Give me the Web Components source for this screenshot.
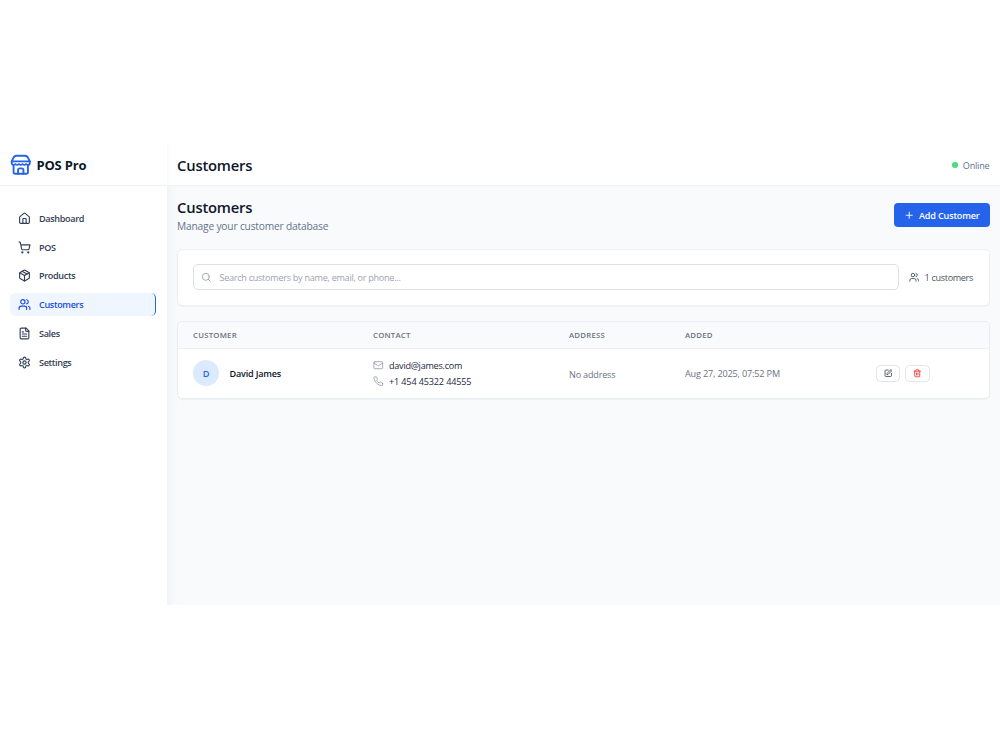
<!DOCTYPE html>
<html lang="en">
<head>
<meta charset="utf-8">
<title>POS Pro</title>
<style>
html, body { margin: 0; padding: 0; background: #fff; }
body {
    width: 1000px;
    height: 750px;
    overflow: hidden;
    font-family: "Open Sans", "Noto Sans", "Liberation Sans", sans-serif;
    font-size: 9.1px;
    letter-spacing: -.2px;
    color: #1e293b;
}
</style>
</head>
<body>
<pos-app>
    <pos-sidebar slot="sidebar" brand="POS Pro">
        <nav-item icon="home">Dashboard</nav-item>
        <nav-item icon="cart">POS</nav-item>
        <nav-item icon="box">Products</nav-item>
        <nav-item icon="users" active>Customers</nav-item>
        <nav-item icon="file">Sales</nav-item>
        <nav-item icon="gear">Settings</nav-item>
    </pos-sidebar>
    <top-bar slot="header" status="Online">Customers</top-bar>
    <page-heading subtitle="Manage your customer database" action="Add Customer">Customers</page-heading>
    <search-panel placeholder="Search customers by name, email, or phone..." count="1 customers"></search-panel>
    <customer-table>
        <customer-row name="David James" email="david@james.com" phone="+1 454 45322 44555" address="No address" added="Aug 27, 2025, 07:52 PM"></customer-row>
    </customer-table>
</pos-app>

<script>
const ICONS = {
    store: '<path d="M2 8.2 3.6 4.6A4.2 4.2 0 0 1 7.4 2h9.2a4.2 4.2 0 0 1 3.8 2.6L22 8.2"/><path d="M4 12.5V20a2 2 0 0 0 2 2h12a2 2 0 0 0 2-2v-7.5"/><path d="M15 22v-4a2 2 0 0 0-2-2h-2a2 2 0 0 0-2 2v4"/><path d="M2 8.2h20"/><path d="M22 8.2v2a2 2 0 0 1-2 2a2.7 2.7 0 0 1-1.59-.63.7.7 0 0 0-.82 0A2.7 2.7 0 0 1 16 12.2a2.7 2.7 0 0 1-1.59-.63.7.7 0 0 0-.82 0A2.7 2.7 0 0 1 12 12.2a2.7 2.7 0 0 1-1.59-.63.7.7 0 0 0-.82 0A2.7 2.7 0 0 1 8 12.2a2.7 2.7 0 0 1-1.59-.63.7.7 0 0 0-.82 0A2.7 2.7 0 0 1 4 12.2a2 2 0 0 1-2-2v-2"/>',
    home: '<path d="M15 21v-8a1 1 0 0 0-1-1h-4a1 1 0 0 0-1 1v8"/><path d="M3 10a2 2 0 0 1 .709-1.528l7-6a2 2 0 0 1 2.582 0l7 6A2 2 0 0 1 21 10v9a2 2 0 0 1-2 2H5a2 2 0 0 1-2-2z"/>',
    cart: '<circle cx="8" cy="21" r="1"/><circle cx="19" cy="21" r="1"/><path d="M2.05 2.05h2l2.66 12.42a2 2 0 0 0 2 1.58h9.78a2 2 0 0 0 1.95-1.57l1.65-7.43H5.12"/>',
    box: '<path d="M11 21.73a2 2 0 0 0 2 0l7-4A2 2 0 0 0 21 16V8a2 2 0 0 0-1-1.73l-7-4a2 2 0 0 0-2 0l-7 4A2 2 0 0 0 3 8v8a2 2 0 0 0 1 1.73z"/><path d="M12 22V12"/><path d="M3.29 7 12 12l8.71-5"/><path d="m7.5 4.27 9 5.15"/>',
    users: '<path d="M16 21v-2a4 4 0 0 0-4-4H6a4 4 0 0 0-4 4v2"/><circle cx="9" cy="7" r="4"/><path d="M22 21v-2a4 4 0 0 0-3-3.87"/><path d="M16 3.13a4 4 0 0 1 0 7.75"/>',
    file: '<path d="M15 2H6a2 2 0 0 0-2 2v16a2 2 0 0 0 2 2h12a2 2 0 0 0 2-2V7Z"/><path d="M14 2v4a2 2 0 0 0 2 2h4"/><path d="M10 9H8"/><path d="M16 13H8"/><path d="M16 17H8"/>',
    gear: '<path d="M12.22 2h-.44a2 2 0 0 0-2 2v.18a2 2 0 0 1-1 1.73l-.43.25a2 2 0 0 1-2 0l-.15-.08a2 2 0 0 0-2.73.73l-.22.38a2 2 0 0 0 .73 2.73l.15.1a2 2 0 0 1 1 1.72v.51a2 2 0 0 1-1 1.74l-.15.09a2 2 0 0 0-.73 2.73l.22.38a2 2 0 0 0 2.73.73l.15-.08a2 2 0 0 1 2 0l.43.25a2 2 0 0 1 1 1.73V20a2 2 0 0 0 2 2h.44a2 2 0 0 0 2-2v-.18a2 2 0 0 1 1-1.73l.43-.25a2 2 0 0 1 2 0l.15.08a2 2 0 0 0 2.73-.73l.22-.39a2 2 0 0 0-.73-2.73l-.15-.08a2 2 0 0 1-1-1.74v-.5a2 2 0 0 1 1-1.74l.15-.09a2 2 0 0 0 .73-2.73l-.22-.38a2 2 0 0 0-2.73-.73l-.15.08a2 2 0 0 1-2 0l-.43-.25a2 2 0 0 1-1-1.73V4a2 2 0 0 0-2-2z"/><circle cx="12" cy="12" r="3"/>',
    plus: '<path d="M5 12h14"/><path d="M12 5v14"/>',
    search: '<circle cx="11" cy="11" r="8"/><path d="m21 21-4.3-4.3"/>',
    mail: '<rect width="20" height="16" x="2" y="4" rx="2"/><path d="m22 7-8.97 5.7a1.94 1.94 0 0 1-2.06 0L2 7"/>',
    phone: '<path d="M22 16.92v3a2 2 0 0 1-2.18 2 19.79 19.79 0 0 1-8.63-3.07 19.5 19.5 0 0 1-6-6 19.79 19.79 0 0 1-3.07-8.67A2 2 0 0 1 4.11 2h3a2 2 0 0 1 2 1.72 12.84 12.84 0 0 0 .7 2.81 2 2 0 0 1-.45 2.11L8.09 9.91a16 16 0 0 0 6 6l1.27-1.27a2 2 0 0 1 2.11-.45 12.84 12.84 0 0 0 2.81.7A2 2 0 0 1 22 16.92z"/>',
    edit: '<path d="M12 3H5a2 2 0 0 0-2 2v14a2 2 0 0 0 2 2h14a2 2 0 0 0 2-2v-7"/><path d="M18.375 2.625a1 1 0 0 1 3 3l-9.013 9.014a2 2 0 0 1-.853.505l-2.873.84a.5.5 0 0 1-.62-.62l.84-2.873a2 2 0 0 1 .506-.852z"/>',
    trash: '<path d="M3 6h18"/><path d="M19 6v14a2 2 0 0 1-2 2H7a2 2 0 0 1-2-2V6"/><path d="M8 6V4a2 2 0 0 1 2-2h4a2 2 0 0 1 2 2v2"/><path d="M10 11v6"/><path d="M14 11v6"/>'
};

class PosIcon extends HTMLElement {
    constructor() {
        super();
        this.attachShadow({ mode: "open" });
        this.shadowRoot.innerHTML = `
            <style>
            :host { display: block; flex: none; width: 13px; height: 13px; }
            svg { display: block; width: 100%; height: 100%; stroke-width: var(--stroke, 2.1); }
            </style>
            <svg viewBox="0 0 24 24" fill="none" stroke="currentColor" stroke-linecap="round" stroke-linejoin="round">${ICONS[this.getAttribute("name")]}</svg>
        `;
    }
}

class PosApp extends HTMLElement {
    constructor() {
        super();
        this.attachShadow({ mode: "open" });
        this.shadowRoot.innerHTML = `
            <style>
            :host { display: flex; box-sizing: border-box; height: 605px; padding-top: 144px; }
            .main { flex: 1; display: flex; flex-direction: column; background: linear-gradient(90deg, #f1f3f5, #f5f7f9 5px, #f8fafc 11px); }
            .content { display: flex; flex-direction: column; padding: 12px 10.5px 0 10px; }
            </style>
            <slot name="sidebar"></slot>
            <div class="main">
                <slot name="header"></slot>
                <div class="content"><slot></slot></div>
            </div>
        `;
    }
}

class PosSidebar extends HTMLElement {
    constructor() {
        super();
        this.attachShadow({ mode: "open" });
        this.shadowRoot.innerHTML = `
            <style>
            :host { display: block; flex: none; width: 167px; background: #fff; }
            .brand {
                display: flex;
                align-items: center;
                gap: 5px;
                box-sizing: border-box;
                height: 41.5px;
                padding: 1px 0 0 10px;
                border-bottom: 1px solid #eef0f3;
                color: #2563eb;
            }
            .brand pos-icon { width: 21.5px; height: 21.5px; }
            .brand span { color: #0f172a; font-size: 13px; font-weight: 700; letter-spacing: -.2px; }
            nav { display: flex; flex-direction: column; gap: 5.3px; padding: 21px 11px 0 10px; }
            </style>
            <div class="brand"><pos-icon name="store"></pos-icon><span>${this.getAttribute("brand")}</span></div>
            <nav><slot></slot></nav>
        `;
    }
}

class NavItem extends HTMLElement {
    constructor() {
        super();
        this.attachShadow({ mode: "open" });
        this.shadowRoot.innerHTML = `
            <style>
            :host {
                display: flex;
                align-items: center;
                gap: 8px;
                box-sizing: border-box;
                height: 23.5px;
                padding-left: 8px;
                border-radius: 5px;
                border-right: 1.4px solid transparent;
                color: #334155;
                font-size: 9.1px;
                font-weight: 600;
                letter-spacing: -.35px;
            }
            :host([active]) { background: #eff6ff; border-right-color: #2563eb; color: #1d4ed8; }
            </style>
            <pos-icon name="${this.getAttribute("icon")}"></pos-icon>
            <slot></slot>
        `;
    }
}

class TopBar extends HTMLElement {
    constructor() {
        super();
        this.attachShadow({ mode: "open" });
        this.shadowRoot.innerHTML = `
            <style>
            :host {
                display: flex;
                align-items: center;
                justify-content: space-between;
                box-sizing: border-box;
                height: 41.5px;
                padding: 1px 10.5px 0 10px;
                background: linear-gradient(90deg, #fafafb, #fff 5px);
                border-bottom: 1px solid #eef0f3;
            }
            .title { color: #0f172a; font-size: 14.8px; font-weight: 600; letter-spacing: -.2px; }
            .status { display: flex; align-items: center; gap: 5px; padding-top: 1px; color: #64748b; }
            .dot { width: 5.5px; height: 5.5px; margin-bottom: 1px; border-radius: 50%; background: #4ade80; }
            </style>
            <span class="title"><slot></slot></span>
            <div class="status"><span class="dot"></span><span>${this.getAttribute("status")}</span></div>
        `;
    }
}

class PageHeading extends HTMLElement {
    constructor() {
        super();
        this.attachShadow({ mode: "open" });
        this.shadowRoot.innerHTML = `
            <style>
            :host { display: flex; align-items: center; justify-content: space-between; height: 35px; margin-bottom: 16px; }
            .title { color: #0f172a; font-size: 14.8px; font-weight: 600; letter-spacing: -.2px; line-height: 21px; }
            .sub { color: #64748b; font-size: 10.2px; letter-spacing: -.17px; line-height: 16px; }
            .button {
                display: flex;
                align-items: center;
                justify-content: center;
                gap: 5px;
                width: 96px;
                height: 23.5px;
                border-radius: 4px;
                background: #2563eb;
                color: #fff;
                font-weight: 600;
                letter-spacing: -.18px;
            }
            .button pos-icon { width: 10.5px; height: 10.5px; }
            </style>
            <div>
                <div class="title"><slot></slot></div>
                <div class="sub">${this.getAttribute("subtitle")}</div>
            </div>
            <div class="button"><pos-icon name="plus"></pos-icon><span>${this.getAttribute("action")}</span></div>
        `;
    }
}

class SearchPanel extends HTMLElement {
    constructor() {
        super();
        this.attachShadow({ mode: "open" });
        this.shadowRoot.innerHTML = `
            <style>
            :host {
                display: flex;
                align-items: center;
                gap: 10px;
                box-sizing: border-box;
                height: 57px;
                margin-bottom: 15.5px;
                padding: 0 15.5px 0 15px;
                background: #fff;
                border: 1px solid #edeff2;
                border-radius: 5px;
                box-shadow: 0 1px 1px rgba(15, 23, 42, .03);
            }
            .field {
                flex: 1;
                display: flex;
                align-items: center;
                gap: 8px;
                box-sizing: border-box;
                height: 25.5px;
                padding-left: 7px;
                border: 1px solid #dde0e5;
                border-radius: 5px;
                color: #9ca3af;
                letter-spacing: -.28px;
            }
            .field pos-icon { width: 10.5px; height: 10.5px; }
            .count { display: flex; align-items: center; gap: 5.5px; color: #4b5563; letter-spacing: -.34px; }
            .count pos-icon { width: 10.5px; height: 10.5px; }
            </style>
            <div class="field"><pos-icon name="search"></pos-icon><span>${this.getAttribute("placeholder")}</span></div>
            <div class="count"><pos-icon name="users"></pos-icon><span>${this.getAttribute("count")}</span></div>
        `;
    }
}

// header and rows share the same column tracks
const COLUMNS = "180px 196px 116px 190.5px 1fr";

class CustomerTable extends HTMLElement {
    constructor() {
        super();
        this.attachShadow({ mode: "open" });
        this.shadowRoot.innerHTML = `
            <style>
            :host {
                display: block;
                overflow: hidden;
                background: #fff;
                border: 1px solid #e9ecf0;
                border-radius: 5px;
                box-shadow: 0 1px 1px rgba(15, 23, 42, .04);
            }
            .head {
                display: grid;
                grid-template-columns: ${COLUMNS};
                align-items: center;
                box-sizing: border-box;
                height: 26.5px;
                padding-left: 15px;
                background: #f8fafc;
                border-bottom: 1px solid #edeff2;
                color: #6b7280;
                font-size: 7.8px;
                font-weight: 600;
                letter-spacing: .22px;
            }
            </style>
            <div class="head"><span>CUSTOMER</span><span>CONTACT</span><span>ADDRESS</span><span>ADDED</span></div>
            <slot></slot>
        `;
    }
}

class CustomerRow extends HTMLElement {
    constructor() {
        super();
        this.attachShadow({ mode: "open" });
        const name = this.getAttribute("name");
        this.shadowRoot.innerHTML = `
            <style>
            :host {
                display: grid;
                grid-template-columns: ${COLUMNS};
                align-items: center;
                height: 49.5px;
                padding-left: 15px;
                color: #6b7280;
            }
            .customer { display: flex; align-items: center; gap: 10.5px; color: #0f172a; font-weight: 600; }
            .avatar {
                display: flex;
                align-items: center;
                justify-content: center;
                width: 26px;
                height: 26px;
                border-radius: 50%;
                background: #dbeafe;
                color: #2563eb;
            }
            .contact { display: flex; flex-direction: column; gap: 2.6px; color: #1e293b; }
            .contact div { display: flex; align-items: center; gap: 5.5px; height: 13px; }
            .contact pos-icon { width: 10.5px; height: 10.5px; color: #9ca3af; }
            .contact .email { letter-spacing: -.26px; }
            .contact .phone { letter-spacing: -.15px; }
            .address { padding-top: 2px; }
            .added { letter-spacing: -.16px; }
            .actions { display: flex; gap: 5px; }
            .actions div {
                display: flex;
                align-items: center;
                justify-content: center;
                box-sizing: border-box;
                width: 24.7px;
                height: 17px;
                border: 1px solid #e2e5ea;
                border-radius: 4.5px;
                color: #4b5563;
            }
            .actions pos-icon { width: 8.5px; height: 8.5px; --stroke: 2.6; }
            .actions .delete { color: #ef4444; }
            </style>
            <div class="customer"><span class="avatar">${name[0]}</span><span>${name}</span></div>
            <div class="contact">
                <div class="email"><pos-icon name="mail"></pos-icon><span>${this.getAttribute("email")}</span></div>
                <div class="phone"><pos-icon name="phone"></pos-icon><span>${this.getAttribute("phone")}</span></div>
            </div>
            <span class="address">${this.getAttribute("address")}</span>
            <span class="added">${this.getAttribute("added")}</span>
            <div class="actions">
                <div><pos-icon name="edit"></pos-icon></div>
                <div class="delete"><pos-icon name="trash"></pos-icon></div>
            </div>
        `;
    }
}

customElements.define("pos-icon", PosIcon);
customElements.define("pos-app", PosApp);
customElements.define("pos-sidebar", PosSidebar);
customElements.define("nav-item", NavItem);
customElements.define("top-bar", TopBar);
customElements.define("page-heading", PageHeading);
customElements.define("search-panel", SearchPanel);
customElements.define("customer-table", CustomerTable);
customElements.define("customer-row", CustomerRow);
</script>
</body>
</html>
